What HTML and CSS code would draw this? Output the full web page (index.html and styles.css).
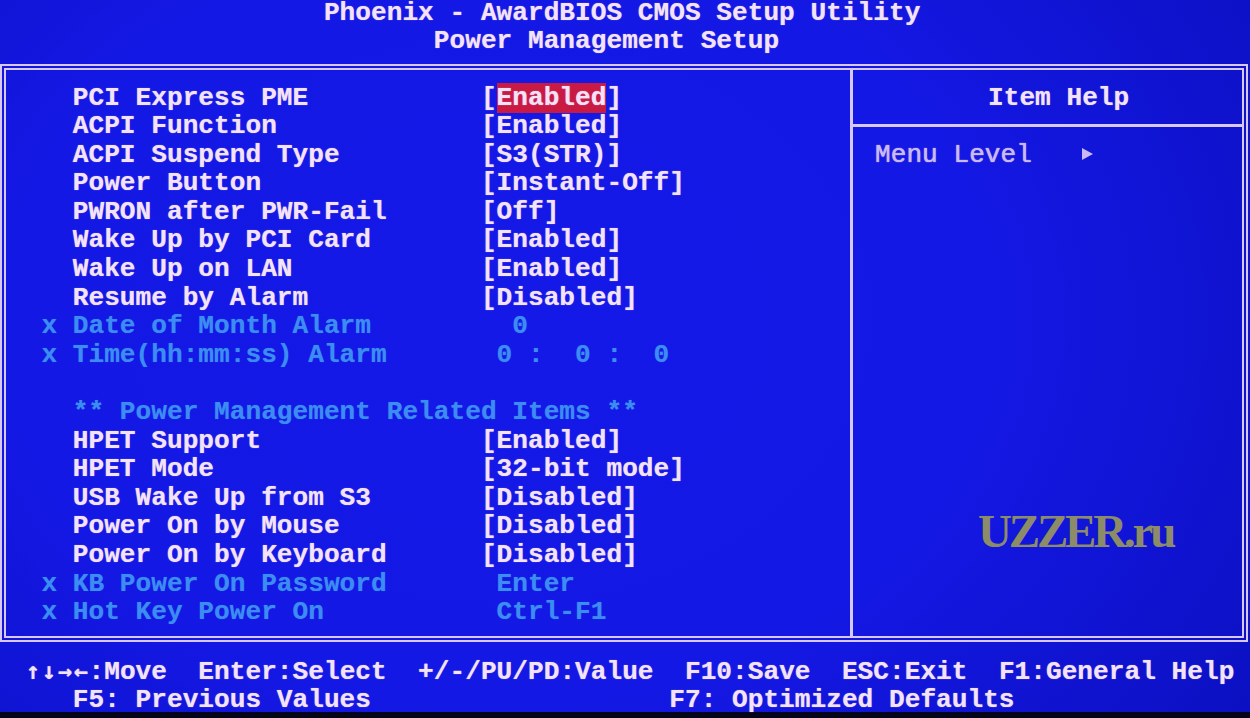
FILE: index.html
```html
<!DOCTYPE html>
<html lang="en">
    <head>
        <meta charset="UTF-8" />
        <meta name="viewport" content="width=device-width, initial-scale=1.0" />
        <title>Power Management Setup</title>
        <link rel="stylesheet" href="styles.css">
    </head>
    <body>
        <div id="screen">
            <div id="title">
                <div class="title-line first">Phoenix - AwardBIOS CMOS Setup Utility</div>
                <div class="title-line second">Power Management Setup</div>
            </div>

            <div id="frame">
                <div id="items">
                    <div class="row"><span class="mark"></span><span class="label">PCI Express PME</span><span class="value">[<span class="selected">Enabled</span>]</span></div>
                    <div class="row"><span class="mark"></span><span class="label">ACPI Function</span><span class="value">[Enabled]</span></div>
                    <div class="row"><span class="mark"></span><span class="label">ACPI Suspend Type</span><span class="value">[S3(STR)]</span></div>
                    <div class="row"><span class="mark"></span><span class="label">Power Button</span><span class="value">[Instant-Off]</span></div>
                    <div class="row"><span class="mark"></span><span class="label">PWRON after PWR-Fail</span><span class="value">[Off]</span></div>
                    <div class="row"><span class="mark"></span><span class="label">Wake Up by PCI Card</span><span class="value">[Enabled]</span></div>
                    <div class="row"><span class="mark"></span><span class="label">Wake Up on LAN</span><span class="value">[Enabled]</span></div>
                    <div class="row"><span class="mark"></span><span class="label">Resume by Alarm</span><span class="value">[Disabled]</span></div>
                    <div class="row locked"><span class="mark">x</span><span class="label">Date of Month Alarm</span><span class="value">  0</span></div>
                    <div class="row locked"><span class="mark">x</span><span class="label">Time(hh:mm:ss) Alarm</span><span class="value"> 0 :  0 :  0</span></div>
                    <div class="row"></div>
                    <div class="row locked"><span class="mark"></span><span class="section">** Power Management Related Items **</span></div>
                    <div class="row"><span class="mark"></span><span class="label">HPET Support</span><span class="value">[Enabled]</span></div>
                    <div class="row"><span class="mark"></span><span class="label">HPET Mode</span><span class="value">[32-bit mode]</span></div>
                    <div class="row"><span class="mark"></span><span class="label">USB Wake Up from S3</span><span class="value">[Disabled]</span></div>
                    <div class="row"><span class="mark"></span><span class="label">Power On by Mouse</span><span class="value">[Disabled]</span></div>
                    <div class="row"><span class="mark"></span><span class="label">Power On by Keyboard</span><span class="value">[Disabled]</span></div>
                    <div class="row locked"><span class="mark">x</span><span class="label">KB Power On Password</span><span class="value"> Enter</span></div>
                    <div class="row locked"><span class="mark">x</span><span class="label">Hot Key Power On</span><span class="value"> Ctrl-F1</span></div>
                </div>

                <div id="help">
                    <div id="help-title">Item Help</div>
                    <div id="help-body">
                        <span class="level">Menu Level   </span><svg class="level-arrow" width="13" height="14" viewBox="0 0 13 14"><polygon points="1,1 12,7 1,13" fill="currentColor" /></svg>
                    </div>
                    <div id="watermark">UZZER.ru</div>
                </div>
            </div>

            <div id="keys">
                <div class="key-line"> <span class="arrows">↑↓→←</span>:Move  Enter:Select  +/-/PU/PD:Value  F10:Save  ESC:Exit  F1:General Help</div>
                <div class="key-line">    F5: Previous Values                   F7: Optimized Defaults</div>
            </div>
        </div>
    </body>
</html>
```

FILE: styles.css
```css
body {
    margin: 0;
    width: 1250px;
    height: 718px;
    overflow: hidden;
    background-color: #05051a;
}
#screen {
    height: 713px;
    font-family: "Liberation Mono", "DejaVu Sans Mono", monospace;
    font-size: 26.16px;
    font-weight: bold;
    line-height: 28.6px;
    color: #f3e2f8;
    text-shadow: 0 0 1px rgba(243, 226, 248, 0.7);
    background: radial-gradient(ellipse 900px 700px at 40% 45%, #1519e8 0%, #1418e4 55%, #0c10c2 100%);
}
.title-line,
.label,
.value,
.section,
.level,
.key-line {
    white-space: pre;
}
#title {
    padding-left: 10px;
    margin-top: -1px;
}
.title-line {
    line-height: 28px;
}
.title-line.first {
    padding-left: 20ch;
}
.title-line.second {
    padding-left: 27ch;
}
#frame {
    display: flex;
    margin: 9px 2px 0 0;
    border: 6px double #d8c8f6;
}
#items {
    flex: 0 0 844px;
    padding: 13.5px 0 9.5px 35.4px;
    box-sizing: border-box;
}
.row {
    display: grid;
    grid-template-columns: 2ch 26ch auto;
    height: 28.6px;
}
.row.locked {
    color: #3c8df2;
    text-shadow: 0 0 1px rgba(60, 141, 242, 0.6);
}
.section {
    grid-column: 2 / span 2;
}
.selected {
    background-color: #c91a44;
}
#help {
    flex: 1;
    position: relative;
    border-left: 3px solid #d8c8f6;
}
#help-title {
    padding: 14px 0 11px 135px;
    border-bottom: 3px solid #d8c8f6;
}
#help-body {
    padding: 14px 0 0 22px;
    color: #c9b9f5;
    font-weight: normal;
    text-shadow: 0 0 1px rgba(201, 185, 245, 0.8), 0 0 1px rgba(201, 185, 245, 0.8);
    display: flex;
    align-items: center;
}
.level-arrow {
    margin-left: 2px;
    margin-top: -2px;
}
#watermark {
    position: absolute;
    left: 125px;
    top: 437px;
    font-family: "Liberation Serif", serif;
    font-size: 47px;
    line-height: 48px;
    letter-spacing: -3.2px;
    color: #8d8c68;
    text-shadow: none;
}
#keys {
    padding: 14.5px 0 0 10px;
}
/* the arrow keys: four cells of the text grid */
.arrows {
    display: inline-block;
    width: 62.8px;
    font-family: "DejaVu Sans Mono", monospace;
    font-size: 0.9em;
    letter-spacing: 0.08em;
}
```
